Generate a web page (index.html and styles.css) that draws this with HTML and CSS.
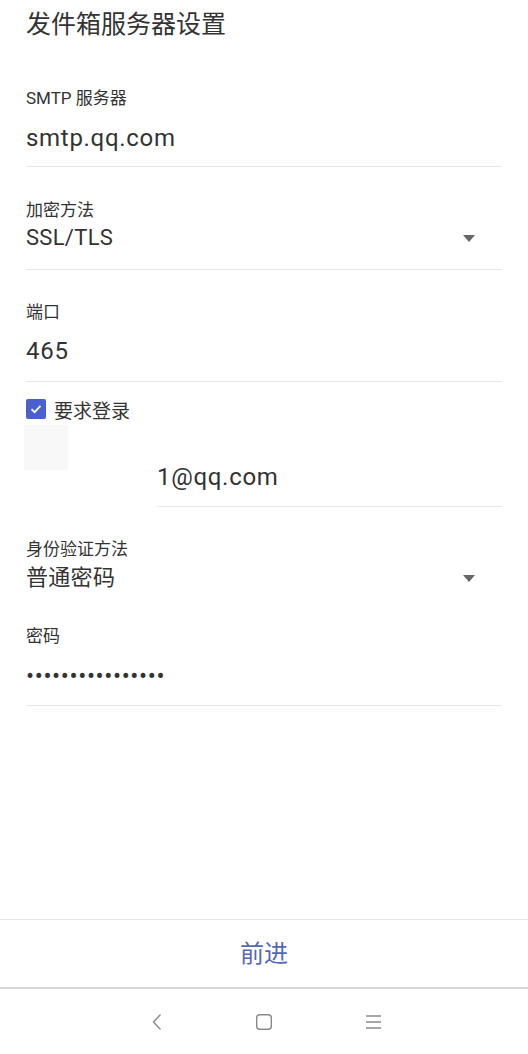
FILE: index.html
```html
<!DOCTYPE html>
<html lang="zh-CN">

<head>
    <meta charset="UTF-8">
    <meta name="viewport" content="width=device-width, initial-scale=1.0">
    <title>发件箱服务器设置</title>
    <link rel="stylesheet" href="styles.css">
</head>

<body>
    <div class="page">
        <main class="content">
            <h1 class="title">发件箱服务器设置</h1>

            <div class="field field-server">
                <div class="label">SMTP 服务器</div>
                <div class="value">smtp.qq.com</div>
            </div>

            <div class="field field-security">
                <div class="label">加密方法</div>
                <div class="value select">
                    <span>SSL/TLS</span>
                    <span class="arrow"></span>
                </div>
            </div>

            <div class="field field-port">
                <div class="label">端口</div>
                <div class="value">465</div>
            </div>

            <label class="check-row">
                <span class="checkbox">
                    <svg width="14" height="14" viewBox="0 0 14 14">
                        <path d="M2.5 7.2 L5.6 10.2 L11.5 3.8" fill="none" stroke="#fff" stroke-width="1.8"/>
                    </svg>
                </span>
                <span class="check-text">要求登录</span>
            </label>

            <div class="account-row">
                <div class="avatar"></div>
                <div class="field field-email">
                    <div class="value">1@qq.com</div>
                </div>
            </div>

            <div class="field field-auth">
                <div class="label">身份验证方法</div>
                <div class="value select">
                    <span>普通密码</span>
                    <span class="arrow"></span>
                </div>
            </div>

            <div class="field field-password">
                <div class="label">密码</div>
                <div class="value dots">••••••••••••••••</div>
            </div>
        </main>

        <div class="action-bar">
            <button class="next-button">前进</button>
        </div>

        <nav class="nav-bar">
            <svg class="nav-icon" width="12" height="18" viewBox="0 0 12 18">
                <path d="M9.5 1.5 L2.5 9 L9.5 16.5" fill="none" stroke="#8a8a8a" stroke-width="1.4"/>
            </svg>
            <svg class="nav-icon" width="18" height="18" viewBox="0 0 18 18">
                <rect x="1.7" y="1.7" width="14.6" height="14.6" rx="3" fill="none" stroke="#8a8a8a" stroke-width="1.4"/>
            </svg>
            <svg class="nav-icon" width="17" height="18" viewBox="0 0 17 18">
                <path d="M1 3 H16 M1 9 H16 M1 15 H16" fill="none" stroke="#8a8a8a" stroke-width="1.3"/>
            </svg>
        </nav>
    </div>
</body>

</html>
```

FILE: styles.css
```css
body {
    margin: 0;
    font-family: Roboto, "Noto Sans CJK SC", sans-serif;
    color: #333;
    background-color: #fff;
}

.page {
    display: flex;
    flex-direction: column;
    height: 100vh;
}

.content {
    flex: 1;
    padding: 0 26px;
}

.title {
    margin: 0;
    padding-top: 7px;
    height: 36px;
    line-height: 36px;
    font-size: 25px;
    font-weight: normal;
    color: #333;
}

.field {
    border-bottom: 1px solid #e8e8e8;
}

.label {
    height: 24px;
    line-height: 24px;
    font-size: 17px;
    color: #333;
}

.value {
    height: 36px;
    line-height: 36px;
    font-size: 24px;
    letter-spacing: 0.7px;
    color: #333;
}

.select {
    display: flex;
    justify-content: space-between;
    align-items: center;
    height: 32px;
    line-height: 32px;
    font-size: 22px;
    letter-spacing: 0.3px;
    padding-right: 27px;
}

.arrow {
    width: 0;
    height: 0;
    border-left: 6px solid transparent;
    border-right: 6px solid transparent;
    border-top: 7px solid #666;
}

.field-server {
    padding: 43px 0 10px;
}

.field-server .value {
    margin-top: 10px;
}

.field-security {
    padding: 31px 0 15px;
}

.field-port {
    padding: 30px 0 12px;
}

.field-port .value {
    margin-top: 9px;
}

.check-row {
    display: flex;
    align-items: center;
    height: 24px;
    margin-top: 15px;
}

.checkbox {
    display: flex;
    align-items: center;
    justify-content: center;
    width: 20px;
    height: 20px;
    border-radius: 2px;
    background-color: #4a5fd0;
}

.check-text {
    margin-left: 8px;
    font-size: 19px;
    color: #333;
}

.account-row {
    display: flex;
    align-items: flex-start;
    margin-top: 4px;
}

.avatar {
    width: 44px;
    height: 45px;
    margin-left: -2px;
    background-color: #f8f8f8;
}

.field-email {
    flex: 1;
    margin-left: 89px;
    padding: 34px 0 11px;
}

.field-auth {
    border-bottom: none;
    padding-top: 30px;
}

.field-auth .select {
    margin-top: 1px;
}

.field-password {
    padding: 30px 0 11px;
}

.field-password .value {
    margin-top: 10px;
}

.dots {
    font-size: 24px;
    letter-spacing: 0.6px;
}

.action-bar {
    display: flex;
    justify-content: center;
    align-items: center;
    height: 62px;
    padding-bottom: 5px;
    border-top: 1px solid #e8e8e8;
    border-bottom: 2px solid #d8d8d8;
}

.next-button {
    border: none;
    background: none;
    font-family: "Noto Sans CJK SC", sans-serif;
    font-size: 24px;
    color: #5468b8;
    padding: 0;
}

.nav-bar {
    display: flex;
    justify-content: center;
    align-items: center;
    gap: 92px;
    height: 65px;
    padding-left: 4px;
}
```
